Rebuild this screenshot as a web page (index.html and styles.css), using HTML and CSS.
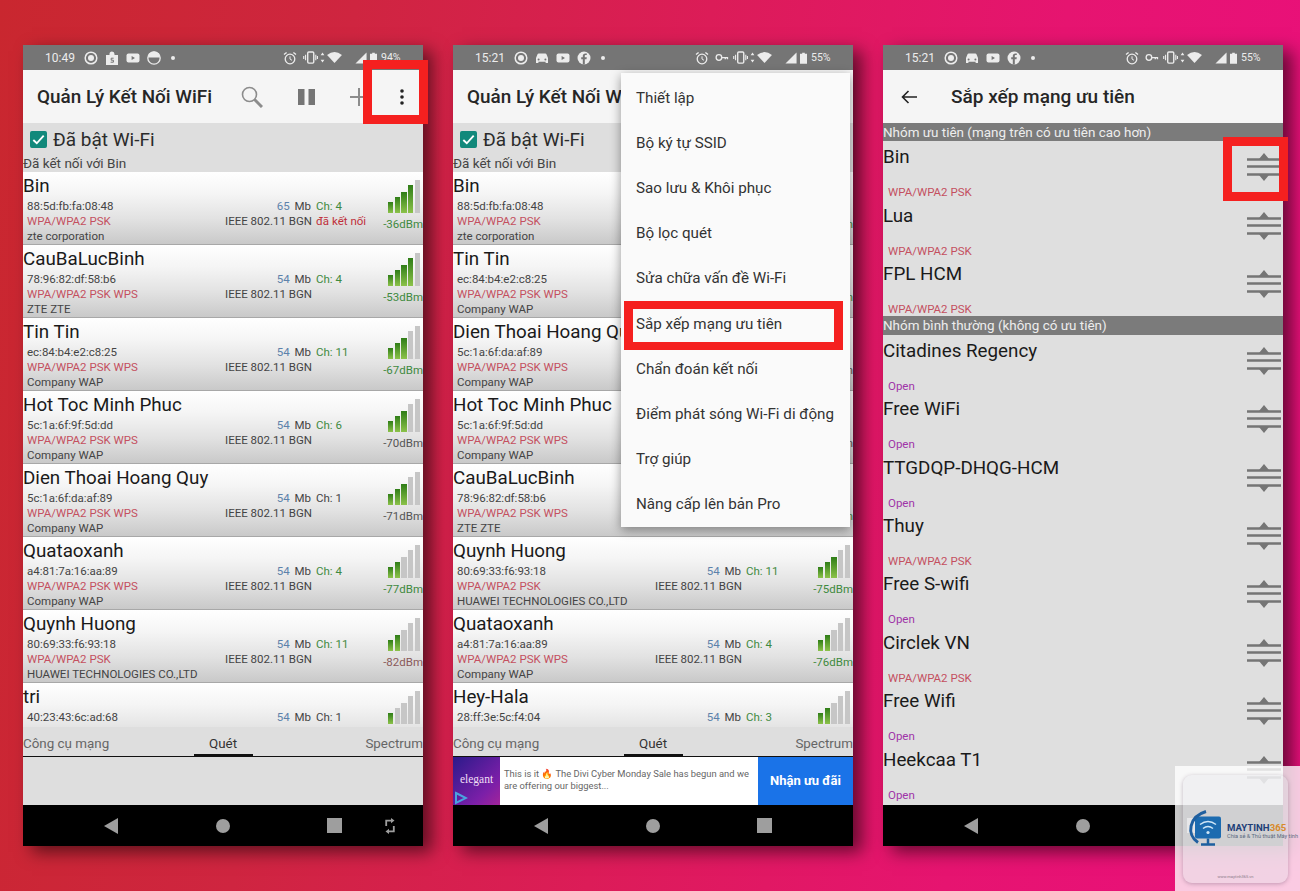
FILE: index.html
```html
<!DOCTYPE html>
<html lang="vi">
<head>
    <meta charset="UTF-8">
    <meta name="viewport" content="width=device-width, initial-scale=1.0">
    <title>Sắp xếp mạng ưu tiên</title>
    <link rel="stylesheet" href="styles.css">
</head>
<body>
    <!-- shared icons -->
    <svg class="sprite" width="0" height="0">
        <symbol id="i-ring" viewBox="0 0 14 14"><circle cx="7" cy="7" r="5.8" fill="none" stroke="currentColor" stroke-width="1.5"/><circle cx="7" cy="7" r="3" fill="currentColor"/></symbol>
        <symbol id="i-bag" viewBox="0 0 14 14"><path d="M4.5 4V3a2.5 2.5 0 0 1 5 0v1H13v10H1V4z" fill="currentColor"/><path d="M8.6 7.2H6.2v2h2.2v2H5.6" fill="none" stroke="#757575" stroke-width="1"/></symbol>
        <symbol id="i-yt" viewBox="0 0 14 14"><rect x="0.5" y="2.5" width="13" height="9" rx="2" fill="currentColor"/><path d="M5.6 5v4l3.4-2z" fill="#757575"/></symbol>
        <symbol id="i-half" viewBox="0 0 14 14"><circle cx="7" cy="7" r="6.2" fill="none" stroke="currentColor" stroke-width="1.3"/><path d="M1 6.5h12A6 6 0 0 0 1 6.5z" fill="currentColor"/></symbol>
        <symbol id="i-car" viewBox="0 0 14 14"><path d="M1 7l1.4-3.6A1.5 1.5 0 0 1 3.8 2.5h6.4a1.5 1.5 0 0 1 1.4.9L13 7v5h-2.4v-1.2H3.4V12H1z" fill="currentColor"/><circle cx="3.6" cy="8.4" r="1" fill="#757575"/><circle cx="10.4" cy="8.4" r="1" fill="#757575"/></symbol>
        <symbol id="i-fb" viewBox="0 0 14 14"><circle cx="7" cy="7" r="6.5" fill="currentColor"/><path d="M7.8 13.4V8.2h1.7l.3-2H7.8V5c0-.6.3-1 1-1h1V2.4H8.4C6.8 2.4 5.8 3.4 5.8 5v1.2H4.2v2h1.6v5.2z" fill="#757575"/></symbol>
        <symbol id="i-alarm" viewBox="0 0 14 14"><circle cx="7" cy="8" r="4.8" fill="none" stroke="currentColor" stroke-width="1.3"/><path d="M7 5.3V8l2 1.3" fill="none" stroke="currentColor"/><path d="M1 3.6L3.6 1.4M13 3.6l-2.6-2.2" stroke="currentColor" stroke-width="1.3"/></symbol>
        <symbol id="i-key" viewBox="0 0 16 10"><circle cx="4.5" cy="5" r="3.2" fill="none" stroke="currentColor" stroke-width="1.5"/><path d="M7.7 4.3H15V7h-1.5V5.8h-1V7H11V5.8H7.7z" fill="currentColor"/></symbol>
        <symbol id="i-vibe" viewBox="0 0 16 14"><rect x="5" y="1" width="6.5" height="12" rx="1.2" fill="none" stroke="currentColor" stroke-width="1.5"/><path d="M2.7 4v6M0.7 5.5v3M13.7 4v6M15.5 5.5v3" stroke="currentColor" stroke-width="1.2"/></symbol>
        <symbol id="i-arrows" viewBox="0 0 5 14"><path d="M2.5 1.5l2 3h-4zM2.5 12.5l2-3h-4z" fill="currentColor"/></symbol>
        <symbol id="i-wifi" viewBox="0 0 16 14"><path d="M0 4.2Q8-1.8 16 4.2L8 13z" fill="currentColor"/></symbol>
        <symbol id="i-signal" viewBox="0 0 13 13"><path d="M12.5 0.5V12.5H0.5z" fill="currentColor"/></symbol>
        <symbol id="i-batt" viewBox="0 0 8 13"><path d="M2.5 0.5h3v1.2H8V13H0V1.7h2.5z" fill="currentColor"/></symbol>
        <symbol id="i-drag" viewBox="0 0 34 28"><path d="M17 0l5 6H12zM17 28l-5-6h10z" fill="#757575"/><path d="M0 6.5h34M0 13.5h34M0 21.5h34" stroke="#757575" stroke-width="2.6"/></symbol>
        <symbol id="i-back" viewBox="0 0 14 16"><path d="M14 0v16L0 8z" fill="currentColor"/></symbol>
        <symbol id="i-rotate" viewBox="0 0 10 18"><path d="M1.2 9V3.6h5M8.8 9v5.4h-5" fill="none" stroke="currentColor" stroke-width="1.8"/><path d="M6 1l3.5 2.6L6 6.2zM4 11.8L0.5 14.4 4 17z" fill="currentColor"/></symbol>
    </svg>

    <main class="phones">
        <!-- màn hình 1: danh sách quét -->
        <section class="phone">
            <div class="status">
                <span class="clock">10:49</span>
                <svg class="ico first"><use href="#i-ring"/></svg>
                <svg class="ico"><use href="#i-bag"/></svg>
                <svg class="ico"><use href="#i-yt"/></svg>
                <svg class="ico"><use href="#i-half"/></svg>
                <span class="dot"></span>
                <div class="status-right">
                    <svg class="ico"><use href="#i-alarm"/></svg>
                    <svg class="ico-vibe"><use href="#i-vibe"/></svg>
                    <svg class="ico-arrows"><use href="#i-arrows"/></svg>
                    <svg class="ico-wifi"><use href="#i-wifi"/></svg>
                    <svg class="ico-signal"><use href="#i-signal"/></svg>
                    <svg class="ico-batt"><use href="#i-batt"/></svg>
                    <span class="pct">94%</span>
                </div>
            </div>
            <header class="toolbar">
                <h1 class="title">Quản Lý Kết Nối WiFi</h1>
                <svg class="tool tool-search" viewBox="0 0 22 22"><circle cx="8.5" cy="8.5" r="7" fill="none" stroke="#8c8c8c" stroke-width="1.6"/><path d="M13.5 13.5L21 21" stroke="#8c8c8c" stroke-width="3"/></svg>
                <svg class="tool tool-pause" viewBox="0 0 17 16"><path d="M0 0h6.5v16H0zM10.5 0H17v16h-6.5z" fill="#757575"/></svg>
                <svg class="tool tool-plus" viewBox="0 0 18 18"><path d="M9 0v18M0 9h18" stroke="#8c8c8c" stroke-width="2"/></svg>
                <svg class="tool tool-more" viewBox="0 0 4 16"><circle cx="2" cy="2" r="1.8" fill="#222"/><circle cx="2" cy="8" r="1.8" fill="#222"/><circle cx="2" cy="14" r="1.8" fill="#222"/></svg>
            </header>
            <div class="wifi-state">
                <label class="wifi-on"><svg class="check" viewBox="0 0 18 18"><rect width="18" height="18" rx="2" fill="#12897b"/><path d="M3.5 9.5l3.7 3.5 7.3-8" fill="none" stroke="#fff" stroke-width="2"/></svg>Đã bật Wi-Fi</label>
                <div class="wifi-conn">Đã kết nối với Bin</div>
            </div>
            <div class="net-list">
                <div class="net">
                    <div class="net-name">Bin</div>
                    <div class="mac">88:5d:fb:fa:08:48</div><div class="speed"><b>65</b> Mb</div><div class="chan green">Ch: 4</div>
                    <div class="sec">WPA/WPA2 PSK</div><div class="std">IEEE 802.11 BGN</div><div class="chan linked">đã kết nối</div>
                    <div class="vendor">zte corporation</div>
                    <div class="signal"><div class="bars lv4"><i></i><i></i><i></i><i></i><i></i></div><span class="dbm green">-36dBm</span></div>
                </div>
                <div class="net">
                    <div class="net-name">CauBaLucBinh</div>
                    <div class="mac">78:96:82:df:58:b6</div><div class="speed"><b>54</b> Mb</div><div class="chan green">Ch: 4</div>
                    <div class="sec">WPA/WPA2 PSK WPS</div><div class="std">IEEE 802.11 BGN</div><div class="chan"></div>
                    <div class="vendor">ZTE ZTE</div>
                    <div class="signal"><div class="bars lv4"><i></i><i></i><i></i><i></i><i></i></div><span class="dbm green">-53dBm</span></div>
                </div>
                <div class="net">
                    <div class="net-name">Tin Tin</div>
                    <div class="mac">ec:84:b4:e2:c8:25</div><div class="speed"><b>54</b> Mb</div><div class="chan green">Ch: 11</div>
                    <div class="sec">WPA/WPA2 PSK WPS</div><div class="std">IEEE 802.11 BGN</div><div class="chan"></div>
                    <div class="vendor">Company WAP</div>
                    <div class="signal"><div class="bars lv3"><i></i><i></i><i></i><i></i><i></i></div><span class="dbm green">-67dBm</span></div>
                </div>
                <div class="net">
                    <div class="net-name">Hot Toc Minh Phuc</div>
                    <div class="mac">5c:1a:6f:9f:5d:dd</div><div class="speed"><b>54</b> Mb</div><div class="chan green">Ch: 6</div>
                    <div class="sec">WPA/WPA2 PSK WPS</div><div class="std">IEEE 802.11 BGN</div><div class="chan"></div>
                    <div class="vendor">Company WAP</div>
                    <div class="signal"><div class="bars lv3"><i></i><i></i><i></i><i></i><i></i></div><span class="dbm">-70dBm</span></div>
                </div>
                <div class="net">
                    <div class="net-name">Dien Thoai Hoang Quy</div>
                    <div class="mac">5c:1a:6f:da:af:89</div><div class="speed"><b>54</b> Mb</div><div class="chan">Ch: 1</div>
                    <div class="sec">WPA/WPA2 PSK WPS</div><div class="std">IEEE 802.11 BGN</div><div class="chan"></div>
                    <div class="vendor">Company WAP</div>
                    <div class="signal"><div class="bars lv3"><i></i><i></i><i></i><i></i><i></i></div><span class="dbm">-71dBm</span></div>
                </div>
                <div class="net">
                    <div class="net-name">Quataoxanh</div>
                    <div class="mac">a4:81:7a:16:aa:89</div><div class="speed"><b>54</b> Mb</div><div class="chan green">Ch: 4</div>
                    <div class="sec">WPA/WPA2 PSK WPS</div><div class="std">IEEE 802.11 BGN</div><div class="chan"></div>
                    <div class="vendor">Company WAP</div>
                    <div class="signal"><div class="bars lv2"><i></i><i></i><i></i><i></i><i></i></div><span class="dbm green">-77dBm</span></div>
                </div>
                <div class="net">
                    <div class="net-name">Quynh Huong</div>
                    <div class="mac">80:69:33:f6:93:18</div><div class="speed"><b>54</b> Mb</div><div class="chan green">Ch: 11</div>
                    <div class="sec">WPA/WPA2 PSK</div><div class="std">IEEE 802.11 BGN</div><div class="chan"></div>
                    <div class="vendor">HUAWEI TECHNOLOGIES CO.,LTD</div>
                    <div class="signal"><div class="bars lv2"><i></i><i></i><i></i><i></i><i></i></div><span class="dbm weak">-82dBm</span></div>
                </div>
                <div class="net">
                    <div class="net-name">tri</div>
                    <div class="mac">40:23:43:6c:ad:68</div><div class="speed"><b>54</b> Mb</div><div class="chan">Ch: 1</div>
                    <div class="signal"><div class="bars lv1"><i></i><i></i><i></i><i></i><i></i></div></div>
                </div>
            </div>
            <div class="tabs"><span>Công cụ mạng</span><span class="tab-on">Quét</span><span class="tab-end">Spectrum</span></div>
            <div class="spare"></div>
            <nav class="navbar">
                <svg class="nav-back"><use href="#i-back"/></svg>
                <span class="nav-home"></span>
                <span class="nav-square"></span>
                <svg class="nav-rotate"><use href="#i-rotate"/></svg>
            </nav>
            <div class="mark mark-more"></div>
        </section>

        <!-- màn hình 2: menu -->
        <section class="phone">
            <div class="status">
                <span class="clock">15:21</span>
                <svg class="ico first"><use href="#i-ring"/></svg>
                <svg class="ico"><use href="#i-car"/></svg>
                <svg class="ico"><use href="#i-yt"/></svg>
                <svg class="ico"><use href="#i-fb"/></svg>
                <span class="dot"></span>
                <div class="status-right">
                    <svg class="ico"><use href="#i-alarm"/></svg>
                    <svg class="ico-key"><use href="#i-key"/></svg>
                    <svg class="ico-vibe"><use href="#i-vibe"/></svg>
                    <svg class="ico-arrows"><use href="#i-arrows"/></svg>
                    <svg class="ico-wifi"><use href="#i-wifi"/></svg>
                    <svg class="ico-signal"><use href="#i-signal"/></svg>
                    <svg class="ico-batt"><use href="#i-batt"/></svg>
                    <span class="pct">55%</span>
                </div>
            </div>
            <header class="toolbar">
                <h1 class="title">Quản Lý Kết Nối WiFi</h1>
            </header>
            <div class="wifi-state">
                <label class="wifi-on"><svg class="check" viewBox="0 0 18 18"><rect width="18" height="18" rx="2" fill="#12897b"/><path d="M3.5 9.5l3.7 3.5 7.3-8" fill="none" stroke="#fff" stroke-width="2"/></svg>Đã bật Wi-Fi</label>
                <div class="wifi-conn">Đã kết nối với Bin</div>
            </div>
            <div class="net-list">
                <div class="net">
                    <div class="net-name">Bin</div>
                    <div class="mac">88:5d:fb:fa:08:48</div><div class="speed"><b>65</b> Mb</div><div class="chan green">Ch: 4</div>
                    <div class="sec">WPA/WPA2 PSK</div><div class="std">IEEE 802.11 BGN</div><div class="chan linked">đã kết nối</div>
                    <div class="vendor">zte corporation</div>
                    <div class="signal"><div class="bars lv4"><i></i><i></i><i></i><i></i><i></i></div><span class="dbm green">-36dBm</span></div>
                </div>
                <div class="net">
                    <div class="net-name">Tin Tin</div>
                    <div class="mac">ec:84:b4:e2:c8:25</div><div class="speed"><b>54</b> Mb</div><div class="chan green">Ch: 11</div>
                    <div class="sec">WPA/WPA2 PSK WPS</div><div class="std">IEEE 802.11 BGN</div><div class="chan"></div>
                    <div class="vendor">Company WAP</div>
                    <div class="signal"><div class="bars lv3"><i></i><i></i><i></i><i></i><i></i></div><span class="dbm green">-67dBm</span></div>
                </div>
                <div class="net">
                    <div class="net-name">Dien Thoai Hoang Quy</div>
                    <div class="mac">5c:1a:6f:da:af:89</div><div class="speed"><b>54</b> Mb</div><div class="chan">Ch: 1</div>
                    <div class="sec">WPA/WPA2 PSK WPS</div><div class="std">IEEE 802.11 BGN</div><div class="chan"></div>
                    <div class="vendor">Company WAP</div>
                    <div class="signal"><div class="bars lv3"><i></i><i></i><i></i><i></i><i></i></div><span class="dbm">-71dBm</span></div>
                </div>
                <div class="net">
                    <div class="net-name">Hot Toc Minh Phuc</div>
                    <div class="mac">5c:1a:6f:9f:5d:dd</div><div class="speed"><b>54</b> Mb</div><div class="chan green">Ch: 6</div>
                    <div class="sec">WPA/WPA2 PSK WPS</div><div class="std">IEEE 802.11 BGN</div><div class="chan"></div>
                    <div class="vendor">Company WAP</div>
                    <div class="signal"><div class="bars lv3"><i></i><i></i><i></i><i></i><i></i></div><span class="dbm">-70dBm</span></div>
                </div>
                <div class="net">
                    <div class="net-name">CauBaLucBinh</div>
                    <div class="mac">78:96:82:df:58:b6</div><div class="speed"><b>54</b> Mb</div><div class="chan green">Ch: 4</div>
                    <div class="sec">WPA/WPA2 PSK WPS</div><div class="std">IEEE 802.11 BGN</div><div class="chan"></div>
                    <div class="vendor">ZTE ZTE</div>
                    <div class="signal"><div class="bars lv3"><i></i><i></i><i></i><i></i><i></i></div><span class="dbm green">-53dBm</span></div>
                </div>
                <div class="net">
                    <div class="net-name">Quynh Huong</div>
                    <div class="mac">80:69:33:f6:93:18</div><div class="speed"><b>54</b> Mb</div><div class="chan green">Ch: 11</div>
                    <div class="sec">WPA/WPA2 PSK</div><div class="std">IEEE 802.11 BGN</div><div class="chan"></div>
                    <div class="vendor">HUAWEI TECHNOLOGIES CO.,LTD</div>
                    <div class="signal"><div class="bars lv3"><i></i><i></i><i></i><i></i><i></i></div><span class="dbm green">-75dBm</span></div>
                </div>
                <div class="net">
                    <div class="net-name">Quataoxanh</div>
                    <div class="mac">a4:81:7a:16:aa:89</div><div class="speed"><b>54</b> Mb</div><div class="chan green">Ch: 4</div>
                    <div class="sec">WPA/WPA2 PSK WPS</div><div class="std">IEEE 802.11 BGN</div><div class="chan"></div>
                    <div class="vendor">Company WAP</div>
                    <div class="signal"><div class="bars lv2"><i></i><i></i><i></i><i></i><i></i></div><span class="dbm green">-76dBm</span></div>
                </div>
                <div class="net">
                    <div class="net-name">Hey-Hala</div>
                    <div class="mac">28:ff:3e:5c:f4:04</div><div class="speed"><b>54</b> Mb</div><div class="chan green">Ch: 3</div>
                    <div class="signal"><div class="bars lv2"><i></i><i></i><i></i><i></i><i></i></div></div>
                </div>
            </div>
            <div class="tabs"><span>Công cụ mạng</span><span class="tab-on">Quét</span><span class="tab-end">Spectrum</span></div>
            <div class="ad">
                <div class="ad-logo">elegant<svg class="ad-play" viewBox="0 0 14 14"><path d="M2 2l10 5-10 5z" fill="none" stroke="#4aa3e0" stroke-width="2"/></svg></div>
                <p class="ad-text">This is it 🔥 The Divi Cyber Monday Sale has begun and we are offering our biggest...</p>
                <div class="ad-btn">Nhận ưu đãi</div>
            </div>
            <nav class="navbar">
                <svg class="nav-back"><use href="#i-back"/></svg>
                <span class="nav-home"></span>
                <span class="nav-square"></span>
            </nav>
            <ul class="menu">
                <li>Thiết lập</li>
                <li>Bộ ký tự SSID</li>
                <li>Sao lưu &amp; Khôi phục</li>
                <li>Bộ lọc quét</li>
                <li>Sửa chữa vấn đề Wi-Fi</li>
                <li class="menu-hit">Sắp xếp mạng ưu tiên</li>
                <li>Chẩn đoán kết nối</li>
                <li>Điểm phát sóng Wi-Fi di động</li>
                <li>Trợ giúp</li>
                <li>Nâng cấp lên bản Pro</li>
            </ul>
        </section>

        <!-- màn hình 3: sắp xếp -->
        <section class="phone">
            <div class="status">
                <span class="clock">15:21</span>
                <svg class="ico first"><use href="#i-ring"/></svg>
                <svg class="ico"><use href="#i-car"/></svg>
                <svg class="ico"><use href="#i-yt"/></svg>
                <svg class="ico"><use href="#i-fb"/></svg>
                <span class="dot"></span>
                <div class="status-right">
                    <svg class="ico"><use href="#i-alarm"/></svg>
                    <svg class="ico-key"><use href="#i-key"/></svg>
                    <svg class="ico-vibe"><use href="#i-vibe"/></svg>
                    <svg class="ico-arrows"><use href="#i-arrows"/></svg>
                    <svg class="ico-wifi"><use href="#i-wifi"/></svg>
                    <svg class="ico-signal"><use href="#i-signal"/></svg>
                    <svg class="ico-batt"><use href="#i-batt"/></svg>
                    <span class="pct">55%</span>
                </div>
            </div>
            <header class="toolbar">
                <svg class="arrow-back" viewBox="0 0 16 14"><path d="M16 7H1.5M7.5 1L1.5 7l6 6" fill="none" stroke="#222" stroke-width="1.6"/></svg>
                <h1 class="title title-sort">Sắp xếp mạng ưu tiên</h1>
            </header>
            <div class="sort-list">
                <div class="group">Nhóm ưu tiên (mạng trên có ưu tiên cao hơn)</div>
                <div class="sort-row"><div class="sort-name">Bin</div><div class="sort-sec">WPA/WPA2 PSK</div><svg class="drag"><use href="#i-drag"/></svg></div>
                <div class="sort-row"><div class="sort-name">Lua</div><div class="sort-sec">WPA/WPA2 PSK</div><svg class="drag"><use href="#i-drag"/></svg></div>
                <div class="sort-row"><div class="sort-name">FPL HCM</div><div class="sort-sec">WPA/WPA2 PSK</div><svg class="drag"><use href="#i-drag"/></svg></div>
                <div class="group">Nhóm bình thường (không có ưu tiên)</div>
                <div class="sort-row"><div class="sort-name">Citadines Regency</div><div class="sort-sec open">Open</div><svg class="drag"><use href="#i-drag"/></svg></div>
                <div class="sort-row"><div class="sort-name">Free WiFi</div><div class="sort-sec open">Open</div><svg class="drag"><use href="#i-drag"/></svg></div>
                <div class="sort-row"><div class="sort-name">TTGDQP-DHQG-HCM</div><div class="sort-sec open">Open</div><svg class="drag"><use href="#i-drag"/></svg></div>
                <div class="sort-row"><div class="sort-name">Thuy</div><div class="sort-sec">WPA/WPA2 PSK</div><svg class="drag"><use href="#i-drag"/></svg></div>
                <div class="sort-row"><div class="sort-name">Free S-wifi</div><div class="sort-sec open">Open</div><svg class="drag"><use href="#i-drag"/></svg></div>
                <div class="sort-row"><div class="sort-name">Circlek VN</div><div class="sort-sec">WPA/WPA2 PSK</div><svg class="drag"><use href="#i-drag"/></svg></div>
                <div class="sort-row"><div class="sort-name">Free Wifi</div><div class="sort-sec open">Open</div><svg class="drag"><use href="#i-drag"/></svg></div>
                <div class="sort-row"><div class="sort-name">Heekcaa T1</div><div class="sort-sec open">Open</div><svg class="drag"><use href="#i-drag"/></svg></div>
            </div>
            <nav class="navbar">
                <svg class="nav-back"><use href="#i-back"/></svg>
                <span class="nav-home"></span>
                <span class="nav-square"></span>
            </nav>
            <div class="mark mark-drag"></div>
        </section>
    </main>

    <!-- logo chìm góc phải -->
    <aside class="stamp">
        <div class="stamp-card">
            <div class="stamp-logo">
                <svg class="stamp-icon" viewBox="0 0 36 36">
                    <path d="M9 6h22a2 2 0 0 1 2 2v18a2 2 0 0 1-2 2H9a2 2 0 0 1-2-2V8a2 2 0 0 1 2-2z" fill="#1c6bb0"/>
                    <path d="M13 34h14M20 28v6" stroke="#1c5f9f" stroke-width="2.5"/>
                    <path d="M12 14q8-6 16 0M15 18q5-4 10 0" fill="none" stroke="#cfe6f7" stroke-width="1.5"/>
                    <circle cx="20" cy="22" r="1.6" fill="#cfe6f7"/>
                    <path d="M10 32C-2 24 1 6 18 1" fill="none" stroke="#1f5f9f" stroke-width="3"/>
                </svg>
                <div class="stamp-words">
                    <div class="stamp-name">MAYTINH<span>365</span></div>
                    <div class="stamp-sub">Chia sẻ &amp; Thủ thuật Máy tính</div>
                </div>
            </div>
            <div class="stamp-url">www.maytinh365.vn</div>
        </div>
    </aside>
</body>
</html>
```

FILE: styles.css
```css
* {
    margin: 0;
    padding: 0;
    box-sizing: border-box;
}

html, body {
    height: 891px;
    overflow: hidden;
}

body {
    position: relative;
    font-family: Roboto, "Noto Sans", sans-serif;
    background: linear-gradient(98deg, #c9272f 0%, #cf2540 25%, #dc1c58 50%, #e61470 75%, #ea0f7c 100%);
    color: #222;
}

.sprite {
    position: absolute;
}

.phones {
    display: flex;
    gap: 30px;
    padding: 45px 0 0 23px;
}

.phone {
    position: relative;
    display: flex;
    flex-direction: column;
    width: 400px;
    height: 801px;
    background: #dedede;
    box-shadow: 9px 6px 16px rgba(0, 0, 0, 0.55);
}

/* status bar */
.status {
    display: flex;
    align-items: center;
    height: 25px;
    padding: 0 23px 0 22px;
    background: #757575;
    color: #ececec;
    flex-shrink: 0;
}

.clock {
    width: 30px;
    font-size: 12px;
}

.ico {
    width: 14px;
    height: 14px;
    margin-right: 7px;
}

.ico.first {
    margin-left: 9px;
}

.dot {
    width: 4px;
    height: 4px;
    margin-left: 3px;
    border-radius: 50%;
    background: #ececec;
}

.status-right {
    display: flex;
    align-items: center;
    margin-left: auto;
}

.status-right .ico {
    margin-right: 6px;
}

.ico-key {
    width: 14px;
    height: 9px;
    margin-right: 4px;
}

.ico-vibe {
    width: 15px;
    height: 13px;
}

.ico-arrows {
    width: 5px;
    height: 13px;
    margin-left: 2px;
}

.ico-wifi {
    width: 15px;
    height: 13px;
    margin: 0 13px 0 2px;
}

.ico-signal {
    width: 12px;
    height: 12px;
    margin-right: 3px;
}

.ico-batt {
    width: 7px;
    height: 12px;
    margin-right: 4px;
}

.pct {
    width: 19px;
    font-size: 10.5px;
}

/* toolbar */
.toolbar {
    display: flex;
    align-items: center;
    height: 53px;
    padding-left: 14px;
    background: #f5f5f5;
    flex-shrink: 0;
}

.title {
    font-size: 18.9px;
    font-weight: 500;
    white-space: nowrap;
    color: #262626;
}

.title-sort {
    margin-left: 34px;
    font-size: 19px;
}

.arrow-back {
    width: 16px;
    height: 14px;
    margin-left: 4px;
}

.tool {
    flex-shrink: 0;
}

.tool-search {
    width: 22px;
    height: 22px;
    margin-left: 29px;
}

.tool-pause {
    width: 17px;
    height: 16px;
    margin-left: 35px;
}

.tool-plus {
    width: 18px;
    height: 18px;
    margin-left: 35px;
}

.tool-more {
    width: 4px;
    height: 16px;
    margin-left: 32px;
}

/* wifi state */
.wifi-state {
    height: 49px;
    background: #dedede;
    flex-shrink: 0;
}

.wifi-on {
    display: flex;
    align-items: center;
    height: 32px;
    padding: 1px 0 0 7px;
    font-size: 19px;
    color: #2b2b2b;
}

.check {
    width: 17px;
    height: 17px;
    margin-right: 6px;
}

.wifi-conn {
    font-size: 13.5px;
    line-height: 16px;
    color: #444;
}

/* network rows */
.net-list {
    height: 555px;
    overflow: hidden;
    flex-shrink: 0;
}

.net {
    display: grid;
    grid-template-columns: 202px 86px 72px 40px;
    grid-template-rows: 27px 15px 15px 15px;
    height: 73px;
    font-size: 11.5px;
    line-height: 15px;
    color: #444;
    background: linear-gradient(#fff 0%, #f5f5f5 30%, #e2e2e2 65%, #c9c9c9 100%);
    border-bottom: 1px solid #a8a8a8;
}

.net-name {
    grid-column: 1 / 4;
    padding-top: 2px;
    font-size: 18.8px;
    line-height: 25px;
    color: #1a1a1a;
    white-space: nowrap;
}

.mac,
.sec,
.vendor {
    padding-left: 4px;
    white-space: nowrap;
}

.sec {
    color: #c4505f;
}

.vendor {
    grid-column: 1 / 3;
}

.speed,
.std {
    text-align: right;
    white-space: nowrap;
}

.speed b {
    margin-right: 2px;
    font-weight: 400;
    color: #5d82ab;
}

.chan {
    padding-left: 5px;
    white-space: nowrap;
}

.chan.green,
.dbm.green {
    color: #3f8a3f;
}

.chan.linked {
    color: #bf2f3a;
}

.signal {
    grid-column: 4;
    grid-row: 1 / -1;
    display: flex;
    flex-direction: column;
    align-items: flex-end;
    padding-top: 8px;
}

.bars {
    display: flex;
    align-items: flex-end;
    gap: 1.5px;
    height: 33px;
    margin-right: 3px;
}

.bars i {
    width: 5.2px;
    background: #c6c6c6;
}

.bars i:nth-child(1) { height: 11px; }
.bars i:nth-child(2) { height: 16px; }
.bars i:nth-child(3) { height: 21px; }
.bars i:nth-child(4) { height: 28px; }
.bars i:nth-child(5) { height: 33px; }

.lv1 i:nth-child(-n+1),
.lv2 i:nth-child(-n+2),
.lv3 i:nth-child(-n+3),
.lv4 i:nth-child(-n+4) {
    background: linear-gradient(#2f7d17, #8cc24a);
}

.dbm {
    margin-top: 4px;
    line-height: 14px;
    white-space: nowrap;
    color: #555;
}

.dbm.weak {
    color: #8a5a5a;
}

/* tabs */
.tabs {
    display: grid;
    grid-template-columns: 1fr auto 1fr;
    height: 30px;
    padding-top: 9px;
    font-size: 13.4px;
    line-height: 16px;
    color: #666;
    background: #dedede;
    border-bottom: 1px solid #111;
    flex-shrink: 0;
}

.tab-end {
    text-align: right;
}

.tab-on {
    position: relative;
    color: #333;
}

/* thanh dưới tab đang chọn */
.tab-on::after {
    content: "";
    position: absolute;
    left: 50%;
    top: 18px;
    width: 59px;
    height: 3px;
    margin-left: -29px;
    background: #111;
}

.spare {
    height: 48px;
    flex-shrink: 0;
}

/* banner */
.ad {
    display: flex;
    height: 48px;
    background: #fff;
    flex-shrink: 0;
}

.ad-logo {
    position: relative;
    width: 47px;
    padding-top: 16px;
    font-family: "Liberation Serif", serif;
    font-size: 11.5px;
    text-align: center;
    color: #f0dff5;
    background: linear-gradient(135deg, #2b1a8a, #7a1fa8 70%, #a3249b);
}

.ad-play {
    position: absolute;
    left: 1px;
    bottom: 0;
    width: 14px;
    height: 14px;
}

.ad-text {
    flex: 1;
    padding: 11px 4px 0 4px;
    font-size: 9.4px;
    line-height: 11.5px;
    color: #666;
}

.ad-btn {
    width: 95px;
    padding-top: 15px;
    font-size: 13px;
    font-weight: 700;
    line-height: 18px;
    text-align: center;
    color: #fff;
    background: #1a73e8;
}

/* nav bar */
.navbar {
    display: flex;
    align-items: center;
    height: 41px;
    padding-left: 81px;
    background: #000;
    color: #9e9e9e;
    flex-shrink: 0;
}

.nav-back {
    width: 14px;
    height: 16px;
}

.nav-home {
    width: 14px;
    height: 14px;
    margin-left: 98px;
    border-radius: 50%;
    background: #9e9e9e;
}

.nav-square {
    width: 15px;
    height: 15px;
    margin-left: 97px;
    background: #9e9e9e;
}

.nav-rotate {
    width: 10px;
    height: 18px;
    margin-left: 43px;
}

/* popup menu */
.menu {
    position: absolute;
    left: 168px;
    top: 28px;
    display: flex;
    flex-direction: column;
    width: 229px;
    height: 454px;
    padding-top: 2px;
    list-style: none;
    background: #fafafa;
    box-shadow: 0 3px 10px rgba(0, 0, 0, 0.4);
}

.menu li {
    position: relative;
    display: flex;
    align-items: center;
    flex: 1;
    padding-left: 15px;
    font-size: 15.2px;
    color: #333;
}

.menu-hit::after {
    content: "";
    position: absolute;
    left: 3px;
    top: 0;
    width: 219px;
    height: 49px;
    box-sizing: border-box;
    border-style: solid;
    border-color: #f5201f;
    border-width: 8px 9px;
}

/* red marks */
.mark {
    position: absolute;
    width: 65px;
    height: 64px;
    border: 9px solid #f5201f;
}

.mark-more {
    left: 340px;
    top: 15px;
}

.mark-drag {
    left: 340px;
    top: 92px;
}

/* sort screen */
.sort-list {
    height: 682px;
    overflow: hidden;
    flex-shrink: 0;
    background: #dfdfdf;
}

.group {
    height: 18.3px;
    font-size: 13.45px;
    line-height: 19px;
    white-space: nowrap;
    color: #ededed;
    background: #7b7b7b;
}

.sort-row {
    position: relative;
    height: 58.4px;
    padding-top: 5px;
}

.sort-name {
    font-size: 18.8px;
    line-height: 22px;
    color: #1a1a1a;
}

.sort-sec {
    margin-top: 17px;
    padding-left: 5px;
    font-size: 11.5px;
    line-height: 14px;
    color: #c4505f;
}

.sort-sec.open {
    color: #a035a8;
}

.drag {
    position: absolute;
    right: 2px;
    top: 12px;
    width: 34px;
    height: 28px;
}

/* watermark */
.stamp {
    position: absolute;
    left: 1175px;
    top: 766px;
    width: 125px;
    height: 125px;
    padding: 9px 12px 8px 8px;
    background: rgba(255, 255, 255, 0.78);
}

.stamp-card {
    position: relative;
    height: 108px;
    border-radius: 9px;
    background: rgba(225, 225, 232, 0.35);
    box-shadow: 0 1px 4px rgba(90, 60, 90, 0.35);
}

.stamp-logo {
    display: flex;
    align-items: center;
    position: absolute;
    left: 5px;
    top: 35px;
    width: 98px;
}

.stamp-icon {
    width: 36px;
    height: 37px;
    flex-shrink: 0;
}

.stamp-words {
    margin: 4px 0 0 3px;
}

.stamp-name {
    font-size: 9.6px;
    font-weight: 700;
    line-height: 11px;
    white-space: nowrap;
    color: #1f3f78;
}

.stamp-name span {
    color: #d98a2b;
}

.stamp-sub {
    font-size: 5.6px;
    line-height: 7px;
    white-space: nowrap;
    color: #5a6a80;
}

.stamp-url {
    position: absolute;
    left: 0;
    right: 0;
    bottom: 4px;
    font-size: 4px;
    text-align: center;
    color: #8a7a88;
}
```
